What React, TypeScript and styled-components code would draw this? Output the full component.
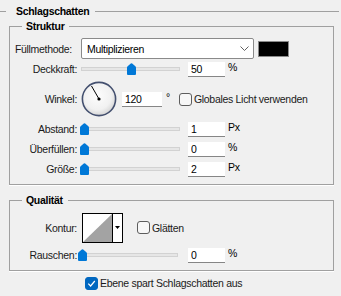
import React from "react";
import styled, { createGlobalStyle } from "styled-components";

const GlobalStyle = createGlobalStyle`
  html, body {
    margin: 0;
    padding: 0;
    background: #f0f0f0;
  }
  body {
    font-family: "Liberation Sans", Arial, sans-serif;
    font-size: 10.5px;
    letter-spacing: -0.3px;
    color: #1a1a1a;
  }
`;

const Panel = styled.div`
  width: 341px;
  height: 296px;
  box-sizing: border-box;
  padding-top: 5px;
  overflow: hidden;
  background: #f0f0f0;
`;

const Header = styled.div`
  display: flex;
  align-items: center;
  height: 12px;
  margin-right: 2px;
`;

const HeaderLine = styled.span<{ $w?: number }>`
  height: 1px;
  background: #a0a0a0;
  ${({ $w }) => ($w ? `width: ${$w}px;` : "flex: 1;")}
`;

const HeaderTitle = styled.span`
  font-weight: bold;
  color: #000;
  margin: 0 6px 0 10px;
`;

const Group = styled.fieldset<{ $top: number }>`
  margin: ${({ $top }) => $top}px 0 0 9px;
  padding: 0;
  width: 325px;
  min-inline-size: 0;
  box-sizing: border-box;
  border: 1px solid #a0a0a0;
  box-shadow: 0 1px 0 #fff;
`;

const Legend = styled.legend`
  margin-left: 12px;
  padding: 0 5px 0 4px;
  font-weight: bold;
  line-height: 12px;
  color: #000;
`;

const Body = styled.div<{ $pt: number }>`
  padding: ${({ $pt }) => $pt}px 0 5px 0;
`;

const Row = styled.div<{ $h: number }>`
  display: flex;
  align-items: center;
  height: ${({ $h }) => $h}px;
`;

const Label = styled.span<{ $pad?: number }>`
  width: 67px;
  flex-shrink: 0;
  box-sizing: border-box;
  padding-right: ${({ $pad }) => $pad ?? 0}px;
  text-align: right;
  white-space: nowrap;
`;

const Select = styled.div`
  display: flex;
  align-items: center;
  width: 173px;
  height: 21px;
  margin-left: 4px;
  padding: 0 4px 0 5px;
  box-sizing: border-box;
  background: #fff;
  border: 1px solid #8a8a8a;
  border-radius: 2px;
  color: #000;

  svg {
    margin-left: auto;
  }
`;

const Swatch = styled.div`
  width: 31px;
  height: 16px;
  margin-left: 4px;
  box-sizing: border-box;
  background: #000;
  border: 1px solid #8a8a8a;
`;

const Slider = styled.div<{ $inset: number }>`
  width: 111px;
  flex-shrink: 0;
  padding-left: ${({ $inset }) => $inset}px;
  box-sizing: border-box;
`;

const Track = styled.div`
  position: relative;
  width: 99px;
  height: 4px;
  box-sizing: border-box;
  background: #e6e6e6;
  border: 1px solid #d2d2d2;
`;

const Thumb = styled.svg`
  position: absolute;
  top: -5px;
`;

const Field = styled.input<{ $w: number; $ml: number }>`
  width: ${({ $w }) => $w}px;
  height: 15px;
  margin: 0 0 0 ${({ $ml }) => $ml}px;
  padding: 0 0 0 3px;
  box-sizing: border-box;
  background: #fff;
  border: 0;
  border-bottom: 1px solid #868686;
  font: inherit;
  letter-spacing: inherit;
  color: #000;
  outline: none;
`;

const Unit = styled.span<{ $ml?: number }>`
  margin-left: ${({ $ml }) => $ml ?? 3}px;
  margin-top: -4px;
  color: #000;
`;

const Dial = styled.svg`
  margin-left: 4px;
  flex-shrink: 0;
`;

const Check = styled.span<{ $ml: number }>`
  display: flex;
  align-items: center;
  margin-left: ${({ $ml }) => $ml}px;
  white-space: nowrap;
`;

const Box = styled.span<{ $on?: boolean }>`
  display: inline-flex;
  align-items: center;
  justify-content: center;
  width: 13px;
  height: 13px;
  flex-shrink: 0;
  margin-right: 2px;
  box-sizing: border-box;
  border-radius: 3px;
  border: 1px solid ${({ $on }) => ($on ? "#0067c0" : "#5d5d5d")};
  background: ${({ $on }) => ($on ? "#0067c0" : "#f7f7f7")};
`;

const Contour = styled.div`
  display: flex;
  width: 41px;
  height: 30px;
  margin-left: 5px;
  box-sizing: border-box;
  border: 1px solid #000;
  background: #fff;
`;

const ContourPreview = styled.div`
  width: 29px;
  border-right: 1px solid #000;
  display: flex;
`;

const ContourArrow = styled.div`
  flex: 1;
  display: flex;
  align-items: center;
  justify-content: center;
`;

const Footer = styled.div`
  display: flex;
  align-items: center;
  height: 14px;
  margin-top: 5px;
  padding-left: 85px;
`;

const CheckMark = () => (
  <svg width="9" height="9" viewBox="0 0 9 9">
    <path d="M1.3 4.7 L3.6 7 L7.8 2" fill="none" stroke="#fff" strokeWidth="1.2" />
  </svg>
);

const CheckBox = ({ label, on, ml }: { label: string; on?: boolean; ml: number }) => (
  <Check $ml={ml}>
    <Box $on={on}>{on && <CheckMark />}</Box>
    {label}
  </Check>
);

const SliderRow = ({
  label,
  value,
  pos,
  unit,
  inset = 4,
}: {
  label: string;
  value: string;
  pos: number;
  unit: string;
  inset?: number;
}) => (
  <Row $h={20}>
    <Label>{label}</Label>
    <Slider $inset={inset}>
      <Track>
        <Thumb width="9" height="12" viewBox="0 0 9 12" style={{ left: -2.5 + pos * 0.95 }}>
          <path
            d="M0 4.6 Q0 3.6 0.9 2.9 L3.8 0.5 Q4.5 0 5.2 0.5 L8.1 2.9 Q9 3.6 9 4.6 V11 Q9 12 8 12 H1 Q0 12 0 11 Z"
            fill="#0078d7"
          />
        </Thumb>
      </Track>
    </Slider>
    <Field $w={37} $ml={0} value={value} readOnly />
    <Unit>{unit}</Unit>
  </Row>
);

const angle = (120 * Math.PI) / 180;

export default function App() {
  return (
    <Panel>
      <GlobalStyle />
      <Header>
        <HeaderLine $w={6} />
        <HeaderTitle>Schlagschatten</HeaderTitle>
        <HeaderLine />
      </Header>

      <Group $top={3}>
        <Legend>Struktur</Legend>
        <Body $pt={6}>
          <Row $h={21}>
            <Label $pad={5}>Füllmethode:</Label>
            <Select>
              Multiplizieren
              <svg width="9" height="5" viewBox="0 0 9 5">
                <polyline points="0.5,0.5 4.5,4.5 8.5,0.5" fill="none" stroke="#606060" />
              </svg>
            </Select>
            <Swatch />
          </Row>
          <SliderRow label="Deckkraft:" value="50" pos={50} unit="%" />
          <Row $h={40}>
            <Label>Winkel:</Label>
            <Dial width="36" height="36" viewBox="0 0 36 36">
              <defs>
                <radialGradient id="dialFill" cx="45%" cy="40%" r="60%">
                  <stop offset="0" stopColor="#fdfdfd" />
                  <stop offset="0.7" stopColor="#f1f1f1" />
                  <stop offset="1" stopColor="#d6d6d6" />
                </radialGradient>
              </defs>
              <circle cx="18" cy="18" r="16.6" fill="url(#dialFill)" stroke="#44506f" strokeWidth="1.6" />
              <line
                x1="18"
                y1="18"
                x2={18 + 15 * Math.cos(angle)}
                y2={18 - 15 * Math.sin(angle)}
                stroke="#000"
                strokeWidth="1"
              />
              <circle cx="18" cy="18" r="1.6" fill="#000" />
            </Dial>
            <Field $w={40} $ml={5} value="120" readOnly />
            <Unit $ml={4}>°</Unit>
            <CheckBox label="Globales Licht verwenden" ml={9} />
          </Row>
          <SliderRow label="Abstand:" value="1" pos={0} unit="Px" />
          <SliderRow label="Überfüllen:" value="0" pos={0} unit="%" />
          <SliderRow label="Größe:" value="2" pos={0} unit="Px" />
        </Body>
      </Group>

      <Group $top={9}>
        <Legend>Qualität</Legend>
        <Body $pt={4}>
          <Row $h={35}>
            <Label>Kontur:</Label>
            <Contour>
              <ContourPreview>
                <svg width="29" height="28" viewBox="0 0 29 28">
                  <polygon points="0,28 29,0 29,28" fill="#a3a3a3" />
                </svg>
              </ContourPreview>
              <ContourArrow>
                <svg width="5" height="3" viewBox="0 0 5 3">
                  <polygon points="0,0 5,0 2.5,3" fill="#000" />
                </svg>
              </ContourArrow>
            </Contour>
            <CheckBox label="Glätten" ml={14} />
          </Row>
          <SliderRow label="Rauschen:" value="0" pos={0} unit="%" inset={2} />
        </Body>
      </Group>

      <Footer>
        <CheckBox label="Ebene spart Schlagschatten aus" on ml={0} />
      </Footer>
    </Panel>
  );
}
